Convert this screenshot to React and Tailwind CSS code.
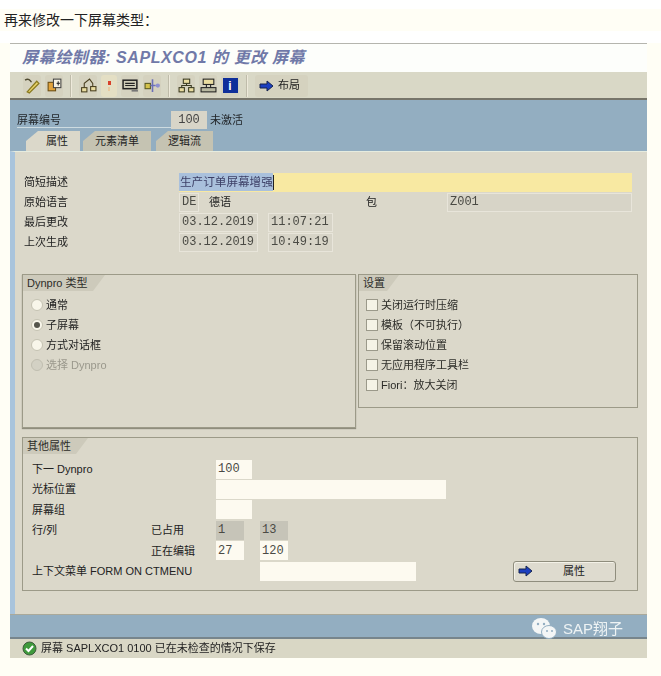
const FONT = "font-['Liberation_Sans','Noto_Sans_CJK_SC',sans-serif]";

const Sep = () => <span className="mx-[3px] h-[22px] w-[2px] bg-[#bfbcaa] border-r border-[#eeeadb]" />;

const ToolIcon = ({ children }) => (
  <span className="flex h-[22px] w-[18px] items-center justify-center rounded-[3px] bg-[#d5d2bf]">
    <svg width="17" height="17" viewBox="0 0 16 16" fill="none">
      {children}
    </svg>
  </span>
);

const BlueArrow = () => (
  <svg width="15" height="12" viewBox="0 0 15 12">
    <path d="M1 4h7V1l6 5-6 5V8H1z" fill="#1c3fc0" stroke="#16254f" strokeWidth="1" />
  </svg>
);

const Toolbar = () => (
  <div className="flex h-[26px] items-center gap-[4px] bg-[#d9d8c6] pl-[13px] pt-[1px]">
    <ToolIcon>
      <path d="M1 3c3-2 5 0 6 2" stroke="#4f4a30" strokeWidth="1.3" />
      <path d="M3 14l9-10 2 2-9 9z" stroke="#8a7a20" strokeWidth="1.2" fill="#e8d36a" />
    </ToolIcon>
    <ToolIcon>
      <rect x="2" y="5" width="7" height="8" fill="#e2a33a" stroke="#6b4d12" />
      <rect x="7" y="2" width="7" height="8" fill="#f7f3e2" stroke="#444" />
      <path d="M10 6h3M11.5 4v4" stroke="#333" />
    </ToolIcon>
    <Sep />
    <ToolIcon>
      <rect x="1.5" y="10" width="5" height="4" fill="#e9dca0" stroke="#4a4020" />
      <rect x="10" y="9" width="5" height="4" fill="#e9dca0" stroke="#4a4020" />
      <path d="M4 10V6l5-4 3 4v3" stroke="#4a4020" />
    </ToolIcon>
    <span className="flex h-[22px] w-[16px] flex-col items-center justify-center gap-[2px] rounded-[3px] bg-[#e4dfc4]">
      <span className="h-[4px] w-[3px] bg-[#d8402a]" />
      <span className="h-[4px] w-[2px] bg-[#e8c9a0]" />
    </span>
    <ToolIcon>
      <rect x="1" y="3" width="13" height="8" fill="#cfcdb8" stroke="#222" strokeWidth="1.4" />
      <path d="M3 6h9M3 8h9" stroke="#222" />
      <path d="M9 13h6" stroke="#777" strokeWidth="1.5" />
    </ToolIcon>
    <ToolIcon>
      <rect x="1" y="6" width="5" height="5" fill="#d4c24a" stroke="#5a5a20" />
      <path d="M6 8h5M8 2v12" stroke="#6c70b8" strokeWidth="1.5" />
      <circle cx="13" cy="8" r="2" fill="#8e90d0" />
    </ToolIcon>
    <Sep />
    <ToolIcon>
      <rect x="5" y="2" width="6" height="4" fill="#e9dca0" stroke="#3a3a20" />
      <rect x="1" y="10" width="5" height="4" fill="#e9dca0" stroke="#3a3a20" />
      <rect x="10" y="10" width="5" height="4" fill="#e9dca0" stroke="#3a3a20" />
      <path d="M8 6v2M3.5 10V8h9v2" stroke="#3a3a20" />
    </ToolIcon>
    <ToolIcon>
      <rect x="3" y="2" width="10" height="5" fill="#e9dca0" stroke="#222" />
      <rect x="1" y="10" width="14" height="4" fill="#b8b8a0" stroke="#222" />
      <path d="M6 7v3M10 7v3" stroke="#222" />
    </ToolIcon>
    <span className="flex h-[22px] w-[18px] items-center justify-center rounded-[3px] bg-[#d5d2bf]">
      <span className="flex h-[15px] w-[15px] items-center justify-center bg-[#0f2f9a] text-[12px] font-bold leading-none text-white">
        i
      </span>
    </span>
    <Sep />
    <span className="flex h-[22px] w-[53px] items-center gap-[4px] rounded-[3px] bg-[#d5d2bf] pl-[4px] text-[11px] text-[#222]">
      <BlueArrow />
      布局
    </span>
  </div>
);

const Tab = ({ label, active, width }) => (
  <div
    className={`flex h-[20px] items-center justify-center text-[11px] text-[#222] [clip-path:polygon(12px_0,100%_0,100%_100%,0_100%,0_10px)] ${width} ${
      active ? "bg-[#dbd8ca] pl-[8px]" : "bg-[#c5c3b2]"
    }`}
  >
    {label}
  </div>
);

const Field = ({ children, width, variant = "display", className = "" }) => {
  const styles = {
    display: "bg-[#d7d4c7] border border-[#e8e5da]",
    input: "bg-[#fdfaf0]",
    gray: "bg-[#c6c4b8]",
  };
  return (
    <span
      className={`flex h-[19px] items-center px-[2px] font-['Liberation_Mono','Noto_Sans_CJK_SC',monospace] text-[12px] text-[#4a4a44] ${styles[variant]} ${width} ${className}`}
    >
      {children}
    </span>
  );
};

const GroupBox = ({ title, titleWidth, height, className = "", children }) => (
  <div className={`border border-[#9c9a88] bg-[#dbd8ca] ${height} ${className}`}>
    <div
      className={`flex h-[16px] items-center bg-[#cdcabb] pl-[4px] text-[11px] leading-none text-[#2c2c28] [clip-path:polygon(0_0,100%_0,calc(100%-12px)_100%,0_100%)] ${titleWidth}`}
    >
      {title}
    </div>
    {children}
  </div>
);

const Radio = ({ label, checked, disabled }) => (
  <div className={`flex h-[20px] items-center gap-[3px] text-[11px] ${disabled ? "text-[#9a988c]" : "text-[#222]"}`}>
    <span
      className={`flex h-[12px] w-[12px] items-center justify-center rounded-full border ${
        disabled ? "border-[#c0beb0] bg-[#d3d1c4]" : "border-[#c4c2b2] bg-[#f8f6ea]"
      }`}
    >
      {checked && <span className="h-[6px] w-[6px] rounded-full bg-[#55554c]" />}
    </span>
    {label}
  </div>
);

const Check = ({ label }) => (
  <div className="flex h-[20px] items-center gap-[3px] text-[11px] text-[#2c2c28]">
    <span className="h-[12px] w-[12px] border border-[#9b998a] bg-[#f5f3e6]" />
    {label}
  </div>
);

const FormRow = ({ label, children }) => (
  <div className="flex h-[20px] items-center text-[11px] text-[#222]">
    <span className="w-[157px] shrink-0 pl-[2px]">{label}</span>
    {children}
  </div>
);

const OtherRow = ({ label, sub, children }) => (
  <div className="flex h-[20.4px] items-center text-[11px] text-[#222]">
    <span className="w-[119px] shrink-0">{label}</span>
    <span className="w-[65px] shrink-0">{sub}</span>
    {children}
  </div>
);

export default function App() {
  return (
    <div className={`flex h-[676px] w-[661px] flex-col overflow-hidden bg-white ${FONT}`}>
      <div className="mt-[9px] flex h-[22px] items-center bg-[#fffef5] pl-[4px] text-[14px] text-[#222]">
        再来修改一下屏幕类型：
      </div>

      <div className="mt-[12px] flex h-[615px] bg-[#fffef5]">
        <div className="ml-[10px] flex w-[637px] flex-col blur-[0.35px]">
          <div className="flex h-[29px] items-center border-t border-[#b5b5ae] bg-[#fdfefb] pl-[12px] text-[16px] font-bold italic tracking-[0.6px] text-[#7079a8]">
            屏幕绘制器: SAPLXCO1 的 更改 屏幕
          </div>
          <Toolbar />
          <div className="h-[2px] bg-[#77756a]" />

          <div className="flex h-[31px] items-end bg-[#93aec1] pl-[7px] text-[11px] text-[#22262a]">
            <span className="mb-[3px] w-[154px] border-b border-[#cddbe0] leading-[13px]">屏幕编号</span>
            <span className="mb-[2px] flex h-[18px] w-[36px] items-center justify-center bg-[#d8d5c8] font-['Liberation_Mono',monospace] text-[12px] text-[#444]">
              100
            </span>
            <span className="mb-[4px] ml-[3px] leading-[14px]">未激活</span>
          </div>

          <div className="flex h-[20px] bg-[#93aec1] pl-[16px]">
            <Tab label="属性" active width="w-[54px]" />
            <div className="w-[3px]" />
            <Tab label="元素清单" width="w-[68px]" />
            <div className="w-[5px]" />
            <Tab label="逻辑流" width="w-[57px]" />
          </div>

          <div className="flex-1 border-l-[5px] border-t border-[#a9c4dc] border-t-[#e6ecdf] bg-[#dbd8ca] px-[7px] pt-[20px]">
            <FormRow label="简短描述">
              <span className="flex h-[19px] w-[453px] items-center bg-[#f8e9a2]">
                <span className="bg-[#a9c0dc] pl-[1px] text-[11.6px] text-[#3c3f66]">生产订单屏幕增强</span>
                <span className="h-[15px] w-px bg-[#222]" />
              </span>
            </FormRow>
            <FormRow label="原始语言">
              <Field width="w-[20px]">DE</Field>
              <span className="ml-[10px] w-[157px]">德语</span>
              <span className="w-[81px]">包</span>
              <Field width="w-[185px]">Z001</Field>
            </FormRow>
            <FormRow label="最后更改">
              <Field width="w-[79px]">03.12.2019</Field>
              <Field width="w-[65px]" className="ml-[10px]">11:07:21</Field>
            </FormRow>
            <FormRow label="上次生成">
              <Field width="w-[79px]">03.12.2019</Field>
              <Field width="w-[65px]" className="ml-[10px]">10:49:19</Field>
            </FormRow>

            <div className="mt-[22px] flex items-start gap-[2px]">
              <GroupBox title="Dynpro 类型" titleWidth="w-[82px]" height="h-[154px]" className="w-[334px] shadow-[0_1px_1px_#8f8d7d]">
                <div className="pl-[8px] pt-[4px]">
                  <Radio label="通常" />
                  <Radio label="子屏幕" checked />
                  <Radio label="方式对话框" />
                  <Radio label="选择 Dynpro" disabled />
                </div>
              </GroupBox>
              <GroupBox title="设置" titleWidth="w-[40px]" height="h-[134px]" className="w-[280px]">
                <div className="pl-[7px] pt-[4px]">
                  <Check label="关闭运行时压缩" />
                  <Check label="模板（不可执行）" />
                  <Check label="保留滚动位置" />
                  <Check label="无应用程序工具栏" />
                  <Check label="Fiori：放大关闭" />
                </div>
              </GroupBox>
            </div>

            <GroupBox title="其他属性" titleWidth="w-[65px]" height="h-[154px]" className="relative mt-[9px] w-[616px]">
              <div className="pl-[9px] pt-[5px]">
                <OtherRow label="下一 Dynpro">
                  <Field width="w-[36px]" variant="input">100</Field>
                </OtherRow>
                <OtherRow label="光标位置">
                  <Field width="w-[230px]" variant="input" />
                </OtherRow>
                <OtherRow label="屏幕组">
                  <Field width="w-[36px]" variant="input" />
                </OtherRow>
                <OtherRow label="行/列" sub="已占用">
                  <Field width="w-[28px]" variant="gray">1</Field>
                  <Field width="w-[28px]" variant="gray" className="ml-[16px]">13</Field>
                </OtherRow>
                <OtherRow sub="正在编辑">
                  <Field width="w-[28px]" variant="input">27</Field>
                  <Field width="w-[28px]" variant="input" className="ml-[16px]">120</Field>
                </OtherRow>
                <div className="flex h-[20.4px] items-center text-[11px] text-[#222]">
                  <span className="w-[228px] shrink-0">上下文菜单 FORM ON CTMENU</span>
                  <Field width="w-[156px]" variant="input" />
                  <span className="ml-[97px] flex h-[21px] w-[103px] items-center rounded-[3px] border border-[#8f8d7d] bg-[#dedbcf] pl-[4px] shadow-[inset_1px_1px_0_#f4f2e8]">
                    <BlueArrow />
                    <span className="ml-[30px]">属性</span>
                  </span>
                </div>
              </div>
            </GroupBox>
          </div>

          <div className="relative h-[23px] border-t border-[#aaa99a] bg-[#93aec1]">
            {/* watermark sits over the band and status bar */}
            <div className="absolute left-[521px] top-[2px] z-10 flex items-center gap-[6px] text-[15px] text-[#eef3f4]">
              <svg width="26" height="24" viewBox="0 0 26 24">
                <ellipse cx="10" cy="9" rx="9" ry="8" fill="#f4f6f6" />
                <ellipse cx="18" cy="15" rx="7.5" ry="6.5" fill="#f4f6f6" stroke="#93aec1" />
                <circle cx="7" cy="7" r="1.2" fill="#93aec1" />
                <circle cx="13" cy="7" r="1.2" fill="#93aec1" />
                <circle cx="16" cy="14" r="1" fill="#93aec1" />
                <circle cx="21" cy="14" r="1" fill="#93aec1" />
              </svg>
              SAP翔子
            </div>
          </div>
          <div className="flex h-[21px] items-center gap-[4px] border-t-2 border-[#77858c] bg-[#d9d7c5] pb-[1px] pl-[12px] text-[11px] text-[#222]">
            <svg width="15" height="15" viewBox="0 0 15 15">
              <circle cx="7.5" cy="7.5" r="6.5" fill="#3f9a3c" stroke="#3c5a3a" />
              <path d="M4 7.5l2.5 2.5L11 5" fill="none" stroke="#fff" strokeWidth="2" />
            </svg>
            屏幕 SAPLXCO1 0100 已在未检查的情况下保存
          </div>
        </div>
      </div>

      <div className="flex-1 bg-[#fffef5]" />
    </div>
  );
}
